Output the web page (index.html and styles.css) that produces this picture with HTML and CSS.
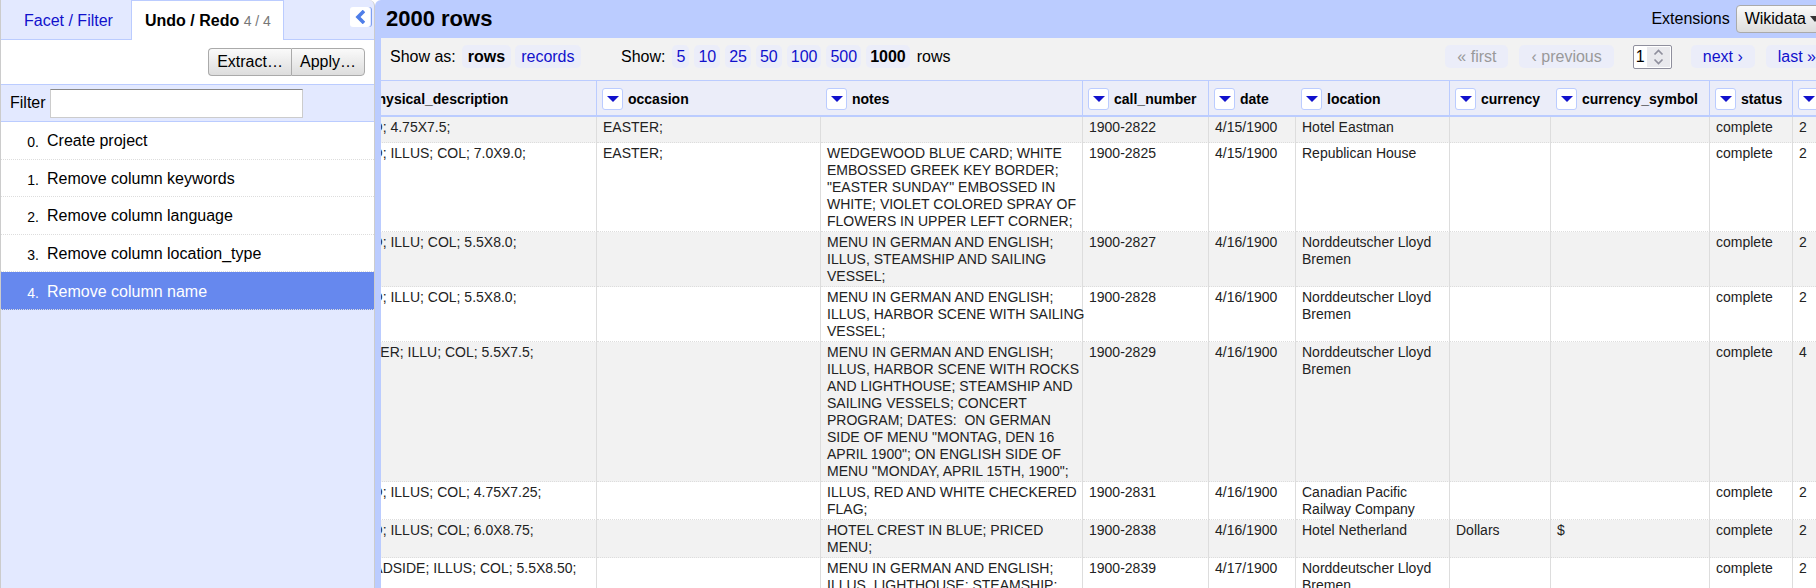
FILE: index.html
```html
<!DOCTYPE html>
<html lang="en">
<head>
<meta charset="utf-8">
<title>Menus project</title>
<link rel="stylesheet" href="styles.css">
</head>
<body>
<div class="app">
  <aside class="side">
    <nav class="tabs">
      <a class="tab" href="#facets">Facet / Filter</a>
      <a class="tab tab-active" href="#history">Undo / Redo <span class="tab-count">4 / 4</span></a>
      <button class="collapse" aria-label="Hide panel"><svg width="10" height="14" viewBox="0 0 10 14"><path d="M9 1 3 7l6 6" fill="none" stroke="#4f7ee8" stroke-width="3.6"/></svg></button>
    </nav>
    <div class="history-controls">
      <button class="button">Extract…</button><button class="button">Apply…</button>
    </div>
    <div class="history-filter">
      <label for="filter">Filter</label>
      <input id="filter" type="text">
    </div>
    <div class="history">
      <a class="entry" href="#0"><span class="entry-index">0.</span>Create project</a>
      <a class="entry" href="#1"><span class="entry-index">1.</span>Remove column keywords</a>
      <a class="entry" href="#2"><span class="entry-index">2.</span>Remove column language</a>
      <a class="entry" href="#3"><span class="entry-index">3.</span>Remove column location_type</a>
      <a class="entry entry-now" href="#4"><span class="entry-index">4.</span>Remove column name</a>
    </div>
  </aside>
  <main class="main">
    <header class="summary">
      <h1 class="row-count">2000 rows</h1>
      <div class="extensions">Extensions <button class="button menu-button">Wikidata <svg width="10" height="6" viewBox="0 0 10 6"><path d="M0 0h10L5 6z" fill="#333"/></svg></button></div>
    </header>
    <div class="controls">
      <div class="group group-mode"><span class="group-label">Show as:</span><b class="pill pill-wide">rows</b><a class="pill pill-wide" href="#records">records</a></div>
      <div class="group group-size"><span class="group-label">Show:</span><a class="pill" href="#5">5</a><a class="pill" href="#10">10</a><a class="pill" href="#25">25</a><a class="pill" href="#50">50</a><a class="pill" href="#100">100</a><a class="pill" href="#500">500</a><b class="pill">1000</b><span class="group-unit">rows</span></div>
      <div class="pager">
        <span class="pill pill-page pill-off">« first</span>
        <span class="pill pill-page pill-off">‹ previous</span>
        <span class="stepper"><input type="text" value="1" aria-label="Page"><svg width="18" height="20" viewBox="0 0 18 20"><path d="M5 7.5 9 3.5l4 4M5 12.5l4 4 4-4" fill="none" stroke="#8f8f9d" stroke-width="1.7"/></svg></span>
        <a class="pill pill-page" href="#next">next ›</a>
        <a class="pill pill-page" href="#last">last »</a>
      </div>
    </div>
    <div class="grid-wrap">
      <table class="grid">
        <colgroup><col class="c-phys"><col class="c-occ"><col class="c-notes"><col class="c-call"><col class="c-date"><col class="c-loc"><col class="c-cur"><col class="c-sym"><col class="c-status"><col class="c-pages"></colgroup>
        <thead>
          <tr>
            <th class="ruled"><div class="head"><button class="drop" aria-label="Column menu"></button>physical_description</div></th>
            <th><div class="head"><button class="drop" aria-label="Column menu"></button>occasion</div></th>
            <th class="ruled"><div class="head"><button class="drop" aria-label="Column menu"></button>notes</div></th>
            <th class="ruled"><div class="head"><button class="drop" aria-label="Column menu"></button>call_number</div></th>
            <th><div class="head"><button class="drop" aria-label="Column menu"></button>date</div></th>
            <th class="ruled"><div class="head"><button class="drop" aria-label="Column menu"></button>location</div></th>
            <th><div class="head"><button class="drop" aria-label="Column menu"></button>currency</div></th>
            <th class="ruled"><div class="head"><button class="drop" aria-label="Column menu"></button>currency_symbol</div></th>
            <th class="ruled"><div class="head"><button class="drop" aria-label="Column menu"></button>status</div></th>
            <th><div class="head"><button class="drop" aria-label="Column menu"></button></div></th>
          </tr>
        </thead>
        <tbody>
          <tr><td>CARD; 4.75X7.5;</td><td>EASTER;</td><td></td><td>1900-2822</td><td>4/15/1900</td><td>Hotel Eastman</td><td></td><td></td><td>complete</td><td>2</td></tr>
          <tr><td>CARD; ILLUS; COL; 7.0X9.0;</td><td>EASTER;</td><td class="notes">WEDGEWOOD BLUE CARD; WHITE EMBOSSED GREEK KEY BORDER; "EASTER SUNDAY" EMBOSSED IN WHITE; VIOLET COLORED SPRAY OF FLOWERS IN UPPER LEFT CORNER;</td><td>1900-2825</td><td>4/15/1900</td><td>Republican House</td><td></td><td></td><td>complete</td><td>2</td></tr>
          <tr><td>CARD; ILLU; COL; 5.5X8.0;</td><td></td><td class="notes">MENU IN GERMAN AND ENGLISH; ILLUS, STEAMSHIP AND SAILING VESSEL;</td><td>1900-2827</td><td>4/16/1900</td><td>Norddeutscher Lloyd Bremen</td><td></td><td></td><td>complete</td><td>2</td></tr>
          <tr><td>CARD; ILLU; COL; 5.5X8.0;</td><td></td><td class="notes">MENU IN GERMAN AND ENGLISH; <span class="keep">ILLUS, HARBOR SCENE WITH SAILING</span> VESSEL;</td><td>1900-2828</td><td>4/16/1900</td><td>Norddeutscher Lloyd Bremen</td><td></td><td></td><td>complete</td><td>2</td></tr>
          <tr><td>FOLDER; ILLU; COL; 5.5X7.5;</td><td></td><td class="notes">MENU IN GERMAN AND ENGLISH; ILLUS, HARBOR SCENE WITH ROCKS AND LIGHTHOUSE; STEAMSHIP AND SAILING VESSELS; CONCERT PROGRAM; DATES:&nbsp; ON GERMAN SIDE OF MENU "MONTAG, DEN 16 APRIL 1900"; ON ENGLISH SIDE OF MENU "MONDAY, APRIL 15TH, 1900";</td><td>1900-2829</td><td>4/16/1900</td><td>Norddeutscher Lloyd Bremen</td><td></td><td></td><td>complete</td><td>4</td></tr>
          <tr><td>CARD; ILLUS; COL; 4.75X7.25;</td><td></td><td class="notes">ILLUS, RED AND WHITE CHECKERED FLAG;</td><td>1900-2831</td><td>4/16/1900</td><td>Canadian Pacific Railway Company</td><td></td><td></td><td>complete</td><td>2</td></tr>
          <tr><td>CARD; ILLUS; COL; 6.0X8.75;</td><td></td><td class="notes">HOTEL CREST IN BLUE; PRICED MENU;</td><td>1900-2838</td><td>4/16/1900</td><td>Hotel Netherland</td><td>Dollars</td><td>$</td><td>complete</td><td>2</td></tr>
          <tr><td>BROADSIDE; ILLUS; COL; 5.5X8.50;</td><td></td><td class="notes">MENU IN GERMAN AND ENGLISH; ILLUS, LIGHTHOUSE; STEAMSHIP;</td><td>1900-2839</td><td>4/17/1900</td><td>Norddeutscher Lloyd Bremen</td><td></td><td></td><td>complete</td><td>2</td></tr>
        </tbody>
      </table>
    </div>
  </main>
</div>
</body>
</html>
```

FILE: styles.css
```css
* { box-sizing: border-box; }
body { margin: 0; font: 16px/18px "Liberation Sans", Arial, sans-serif; color: #000; background: #fff; }
a { color: #11c; text-decoration: none; }
button, input { font: inherit; color: inherit; margin: 0; }
.app { display: flex; height: 100vh; overflow: hidden; }

.side { flex: none; width: 375px; border-left: 1px solid #ccc; border-right: 1px solid #ccc; border-top-right-radius: 6px; background: #e3e9ff; }
.tabs { display: flex; height: 40px; border-bottom: 1px solid #bcf; }
.tab { height: 40px; padding: 12px 17px 0 23px; }
.tab-active { padding: 11px 12px 0 13px; border: 1px solid #bcf; border-bottom: 0; background: #fff; color: #000; font-weight: bold; }
.tab:first-child { width: 130px; }
.tab-count { font-size: 14px; font-weight: normal; color: #777; }
.collapse { display: flex; align-items: center; justify-content: center; width: 20px; height: 20px; margin: 7px 4px 0 auto; padding: 0; border: 0; border-radius: 3px; background: #fff; box-shadow: 1px 0 #e3e9ff, 2px 0 #7f9ff0; }
.history-controls { display: flex; justify-content: flex-end; padding: 8px 9px; background: #fff; border-bottom: 1px solid #bcf; }
.button { height: 28px; padding: 0 8px; border: 1px solid #aaa; border-radius: 4px; background: linear-gradient(#fafafa, #ddd); }
.history-controls .button:first-child { border-right: 0; border-radius: 4px 0 0 4px; }
.history-controls .button:last-child { border-radius: 0 4px 4px 0; }
.history-filter { display: flex; align-items: center; gap: 4px; height: 37px; padding: 0 9px; border-bottom: 1px solid #bcf; }
.history-filter input { width: 253px; height: 29px; border: 1px solid #ccc; border-top-color: #888; background: #fff; }
.history { display: grid; grid-auto-rows: 1fr; height: 188px; background: #fff; }
.entry { display: flex; align-items: center; padding-top: 2px; border-bottom: 1px dotted #ddd; color: #000; }
.entry-index { width: 38px; margin-right: 8px; padding-top: 2px; font-size: 14px; text-align: right; }
.entry-now { background: #68e; color: #fff; }

.main { flex: 1; min-width: 0; display: flex; flex-direction: column; border-left: 6px solid #bcf; border-top-left-radius: 6px; background: #fff; }
.summary { display: flex; flex: none; align-items: center; justify-content: space-between; height: 38px; padding-left: 5px; background: #bcf; }
.row-count { margin: 0; font-size: 22px; line-height: 26px; }
.extensions { display: flex; align-items: center; gap: 6px; margin-right: -13px; }
.menu-button { display: flex; align-items: center; gap: 4px; }
.controls { display: flex; flex: none; height: 42px; padding: 7px 0 0 9px; background: #f2f2f2; overflow: hidden; }
.group { display: flex; align-items: flex-start; gap: 5px; line-height: 23px; white-space: nowrap; }
.group-mode { width: 231px; gap: 4px; }
.group-label { margin-right: 2px; }
.group-unit { margin-left: 2px; }
.pill { height: 23px; padding: 0 4px; border-radius: 5px; background: #ebedf9; line-height: 23px; white-space: nowrap; }
.pill-wide { padding: 0 6px; }
.pill-page { padding: 0 12px; }
.pill-off { color: #999; }
.pager { display: flex; gap: 11px; margin: 0 -12px 0 auto; }
.stepper { display: flex; align-items: center; width: 39px; height: 24px; margin: 0 8px; border: 1px solid #8f8f9d; border-radius: 2px; background: #fff; }
.stepper input { width: 13px; padding: 0 0 0 2px; border: 0; background: none; }
.stepper svg { width: 23px; background: #e9e9ed; }

.grid-wrap { flex: 1; overflow: hidden; }
.grid { width: 1508px; margin-left: -43px; table-layout: fixed; border-collapse: separate; border-spacing: 0; font-size: 14px; line-height: 17px; color: #222; }
.c-phys { width: 259px; }
.c-occ { width: 224px; }
.c-notes { width: 262px; }
.c-call { width: 126px; }
.c-date { width: 87px; }
.c-loc { width: 154px; }
.c-cur { width: 101px; }
.c-sym { width: 159px; }
.c-status { width: 83px; }
.c-pages { width: 53px; }
.grid th { height: 37px; padding: 0 0 0 5px; border-top: 1px solid #bcf; border-bottom: 2px solid #bcf; background: #ebedf9; color: #000; text-align: left; }
.grid .ruled { border-right: 1px solid #bcf; }
.head { display: flex; align-items: center; gap: 5px; padding-top: 2px; }
.drop { flex: none; display: flex; justify-content: center; width: 21px; height: 22px; padding: 7px 0 0; border: 1px solid #bcf; border-radius: 3px; background: #fff; }
.drop::before { content: ""; border: 6px solid transparent; border-top: 6px solid #11c; border-bottom: 0; }
.grid td { height: 26px; padding: 2px 5px 1px 6px; border-right: 1px solid #ddd; border-bottom: 1px dotted #ddd; vertical-align: top; }
.grid td.notes { padding-right: 0; }
.keep { white-space: nowrap; }
.grid td:first-child { padding-left: 5px; }
.grid tbody tr:nth-child(n + 2) td { height: auto; }
.grid tbody tr:nth-child(odd) { background: #f2f2f2; }
```
